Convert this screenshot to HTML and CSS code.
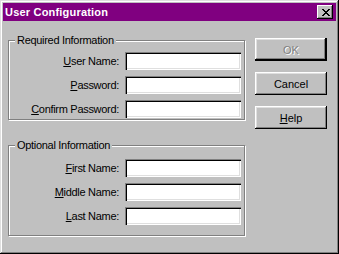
FILE: index.html
```html
<!DOCTYPE html>
<html lang="en">
<head>
    <meta charset="UTF-8">
    <title>User Configuration</title>
    <link rel="stylesheet" href="styles.css">
</head>
<body>
    <div class="window">
        <div class="titlebar">
            <span class="title">User Configuration</span>
            <span class="close">
                <svg width="8" height="7" viewBox="0 0 8 7" shape-rendering="crispEdges">
                    <path fill="#000" d="M0 0h2v1H0zM6 0h2v1H6zM1 1h2v1H1zM5 1h2v1H5zM2 2h4v1H2zM3 3h2v1H3zM2 4h4v1H2zM1 5h2v1H1zM5 5h2v1H5zM0 6h2v1H0zM6 6h2v1H6z"/>
                </svg>
            </span>
        </div>

        <div class="dialog">
            <div class="groups">
                <fieldset class="group group-required">
                    <legend>Required Information</legend>
                    <div class="row">
                        <label for="userName"><u>U</u>ser Name:</label>
                        <input type="text" id="userName" class="edit">
                    </div>
                    <div class="row">
                        <label for="password"><u>P</u>assword:</label>
                        <input type="password" id="password" class="edit">
                    </div>
                    <div class="row">
                        <label for="confirm"><u>C</u>onfirm Password:</label>
                        <input type="password" id="confirm" class="edit">
                    </div>
                </fieldset>

                <fieldset class="group group-optional">
                    <legend>Optional Information</legend>
                    <div class="row">
                        <label for="firstName"><u>F</u>irst Name:</label>
                        <input type="text" id="firstName" class="edit">
                    </div>
                    <div class="row">
                        <label for="middleName"><u>M</u>iddle Name:</label>
                        <input type="text" id="middleName" class="edit">
                    </div>
                    <div class="row">
                        <label for="lastName"><u>L</u>ast Name:</label>
                        <input type="text" id="lastName" class="edit">
                    </div>
                </fieldset>
            </div>

            <div class="buttons">
                <button class="btn btn-default" disabled>OK</button>
                <button class="btn">Cancel</button>
                <button class="btn"><u>H</u>elp</button>
            </div>
        </div>
    </div>
</body>
</html>
```

FILE: styles.css
```css
body {
    margin: 0;
    padding: 0;
    font-family: "Liberation Sans", Arial, sans-serif;
    font-size: 11px;
    letter-spacing: -0.3px;
    color: #000;
}
.window {
    box-sizing: border-box;
    width: 339px;
    height: 254px;
    padding: 3px;
    background-color: #c0c0c0;
    box-shadow: inset -1px -1px #000, inset 1px 1px #dfdfdf, inset -2px -2px #808080, inset 2px 2px #fff;
}
.titlebar {
    display: flex;
    align-items: center;
    justify-content: space-between;
    height: 18px;
    padding-left: 2px;
    background-color: #800080;
}
.title {
    color: #fff;
    font-weight: bold;
    letter-spacing: 0.2px;
}
.close {
    display: flex;
    align-items: center;
    justify-content: center;
    box-sizing: border-box;
    width: 16px;
    height: 14px;
    margin-right: 3px;
    padding-left: 1px;
    background-color: #c0c0c0;
    box-shadow: inset -1px -1px #000, inset 1px 1px #fff, inset -2px -2px #808080;
}
.dialog {
    display: flex;
}
.groups {
    width: 237px;
    padding: 13px 0 0 5px;
}
.group {
    box-sizing: border-box;
    margin: 0;
    padding: 5px 3px 0 0;
    min-inline-size: 0;
    border: 1px solid #808080;
    box-shadow: inset 1px 1px #fff, 1px 1px #fff;
}
.group-required {
    height: 86px;
}
.group-optional {
    height: 97px;
    margin-top: 19px;
    padding-top: 7px;
}
legend {
    margin-left: 6px;
    padding: 0 2px;
    line-height: 13px;
    background-color: #c0c0c0;
}
.row {
    display: flex;
    align-items: center;
    justify-content: flex-end;
    gap: 6px;
    height: 18px;
    margin-bottom: 6px;
}
.edit {
    box-sizing: border-box;
    width: 116px;
    height: 18px;
    margin: 0;
    padding: 0 3px;
    border: none;
    outline: none;
    font: inherit;
    background-color: #fff;
    box-shadow: inset 1px 1px #808080, inset 2px 2px #000, inset -1px -1px #fff, inset -2px -2px #dfdfdf;
}
.buttons {
    display: flex;
    flex-direction: column;
    gap: 11px;
    padding: 17px 0 0 10px;
}
.btn {
    box-sizing: border-box;
    width: 72px;
    height: 23px;
    padding: 0;
    border: none;
    font: inherit;
    color: #000;
    background-color: #c0c0c0;
    box-shadow: inset -1px -1px #000, inset 1px 1px #fff, inset -2px -2px #808080, inset 2px 2px #dfdfdf;
}
.btn-default {
    color: #808080;
    text-shadow: 1px 1px #fff;
    box-shadow: inset -2px -2px #000, inset 1px 1px #fff, inset -3px -3px #808080, inset 2px 2px #dfdfdf;
}
```
